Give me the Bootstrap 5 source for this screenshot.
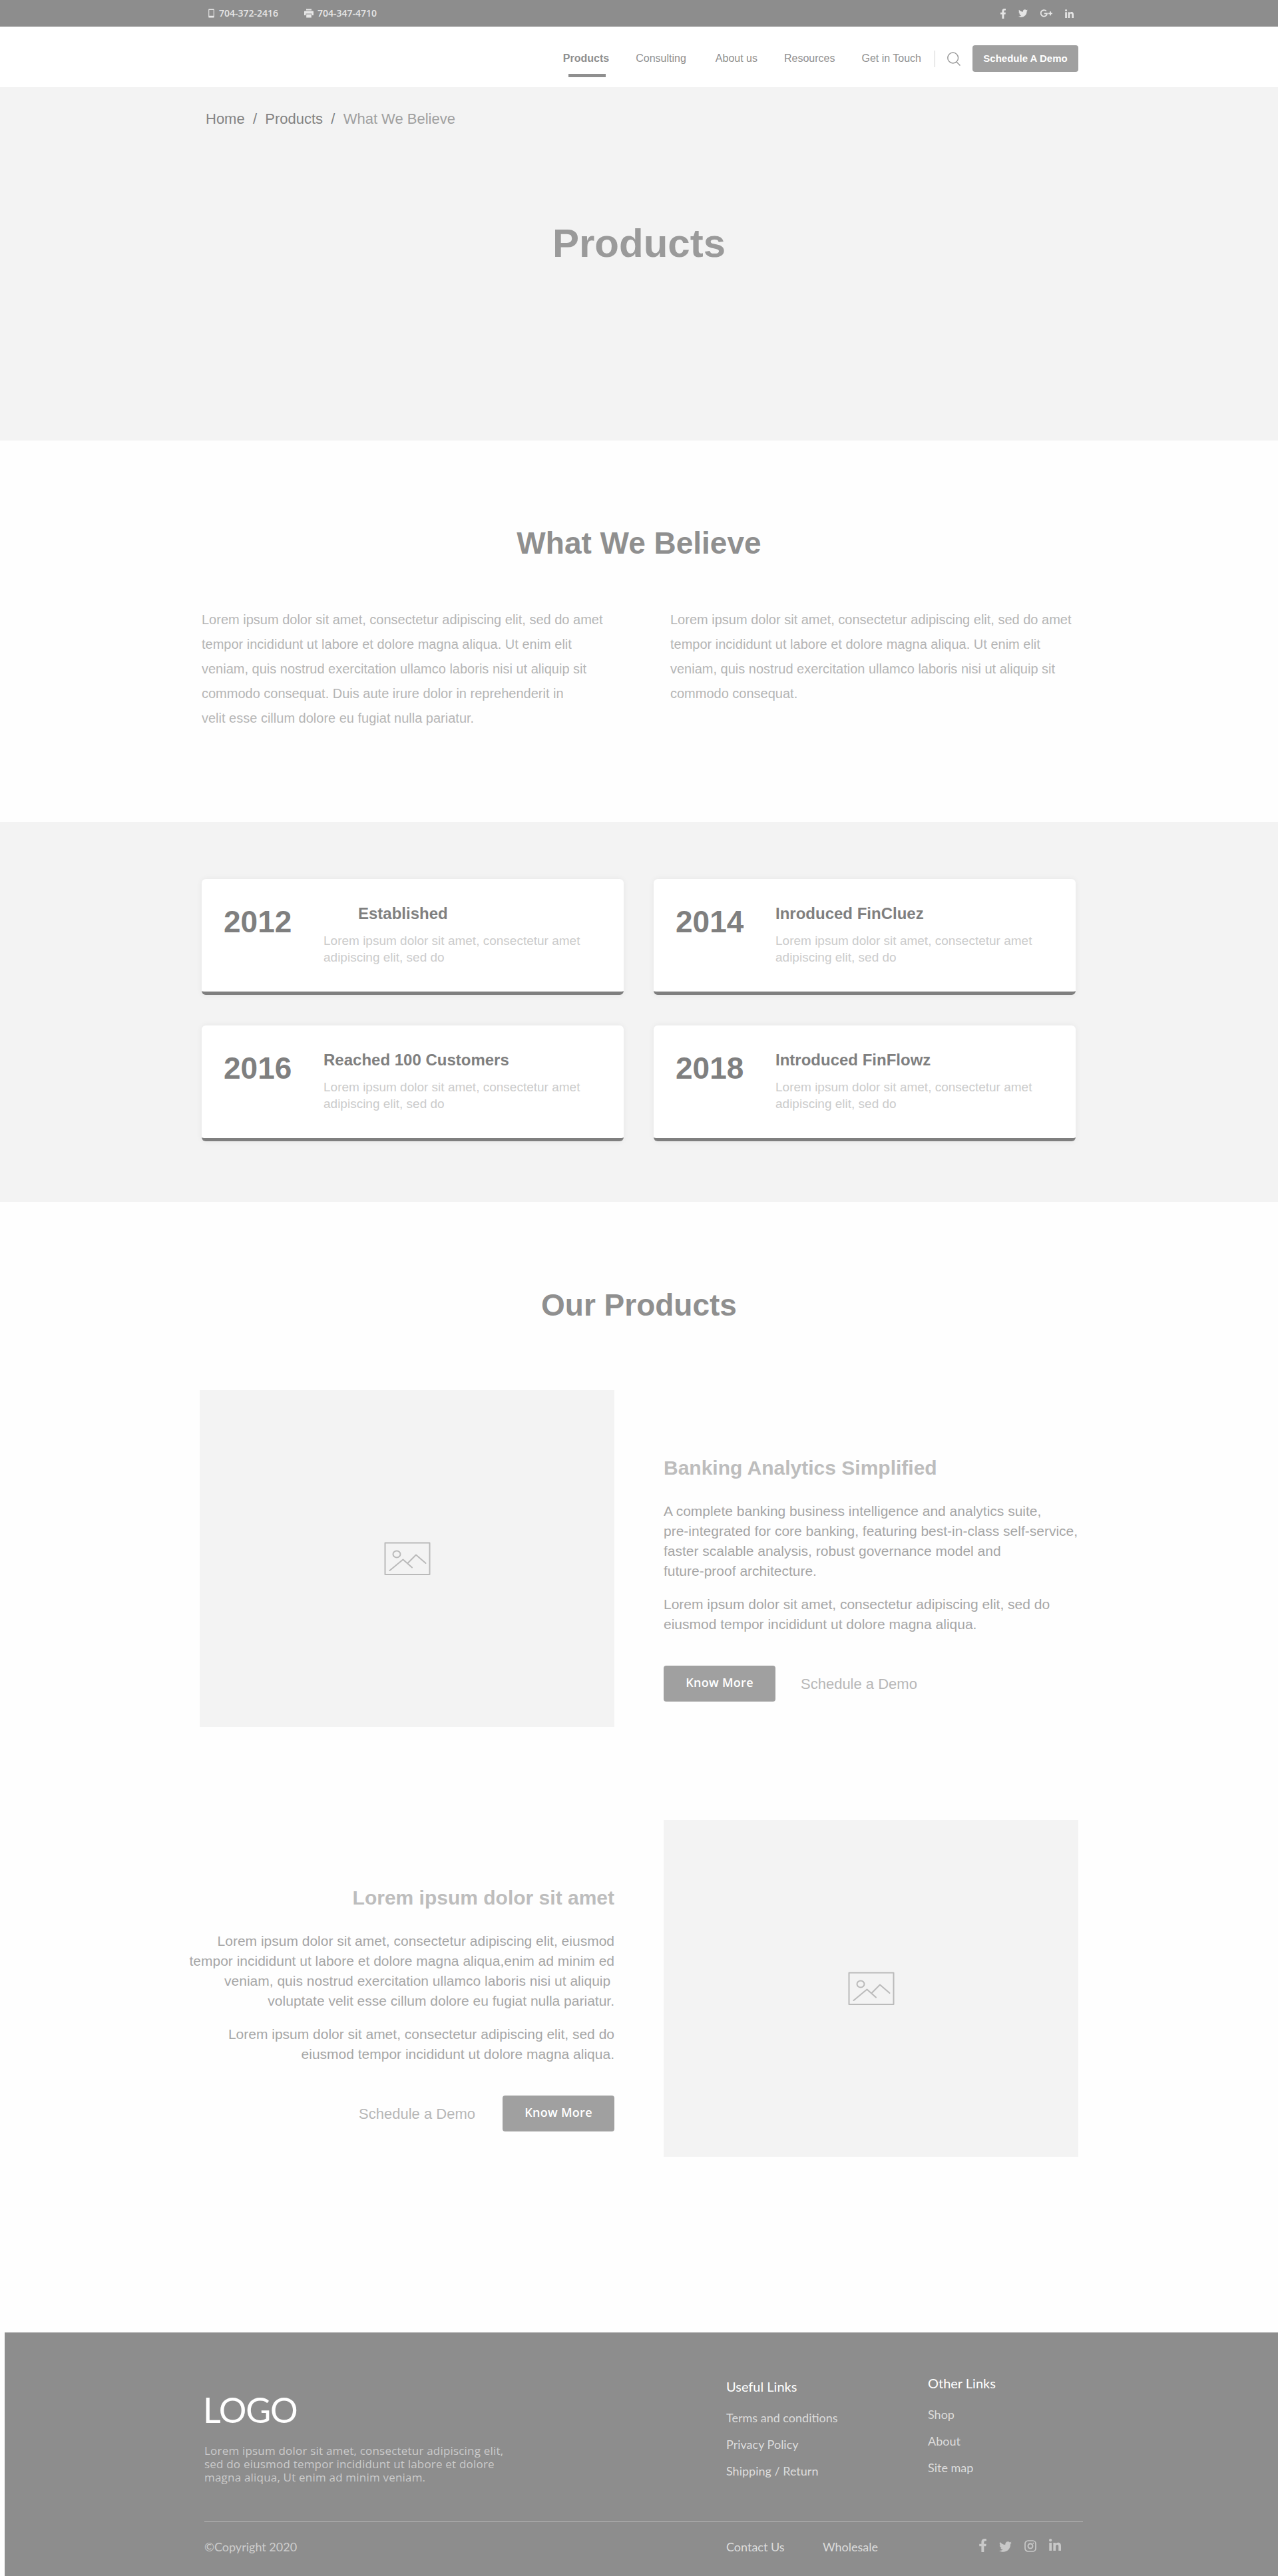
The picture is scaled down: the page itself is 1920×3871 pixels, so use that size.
<!DOCTYPE html>
<html lang="en">
<head>
<meta charset="utf-8">
<meta name="viewport" content="width=device-width, initial-scale=1">
<title>Products</title>
<link href="https://cdn.jsdelivr.net/npm/bootstrap@5.3.0/dist/css/bootstrap.min.css" rel="stylesheet">
<style>
  body { font-family: "Liberation Sans", Arial, sans-serif; background: #fefefe; color: #8f8f8f; }
  a { color: inherit; text-decoration: none; }
  svg { display: block; flex: none; }
  p { margin: 0; white-space: pre-line; }
  .container { max-width: 1320px; padding: 0; }
  .tone-soft { background: #f3f3f3; }

  .top-strip { height: 40px; background: #8d8d8d; color: #e6e6e6; font: 600 14px/20px "Open Sans", sans-serif; }
  .top-strip .phones { padding-left: 13px; gap: 39px; }
  .top-strip .phones a { gap: 7px; }
  .top-strip .phones .fax { gap: 6px; }
  .top-strip .socials { padding-right: 7px; gap: 19px; fill: #e6e6e6; }

  .site-header { height: 91px; background: #fff; }
  .site-header .container { height: 91px; padding-top: 5px; }
  .site-header .nav { gap: 40px; }
  .site-header .nav-link { padding: 0; font-size: 16px; line-height: 24px; color: #8f8f8f; }
  .site-header .nav-link.wide { margin-left: 4px; }
  .site-header .nav-link.active { font-weight: 700; }
  .site-header .nav-link.active::after { content: ""; position: absolute; left: 8px; top: 35px; width: 56px; height: 5px; background: #8f8f8f; }
  .site-header .rule { width: 1px; height: 25px; background: #cfcfcf; margin: 0 18px 0 20px; }
  .btn-grey { background: #a0a0a0; color: #fff; border: 0; border-radius: 4px; padding: 0; }
  .btn-demo { width: 159px; height: 40px; font-size: 15px; font-weight: 700; line-height: 39px; margin-left: 18px; }

  .hero { height: 531px; }
  .hero .breadcrumb-line { padding: 30px 0 0 9px; font-size: 22px; line-height: 36px; white-space: pre; color: #838383; }
  .hero .breadcrumb-line span { color: #a0a0a0; }
  .hero h1 { font-size: 60px; line-height: 70px; font-weight: 700; color: #9a9a9a; margin: 134px 0 0; }

  .section-title { font-size: 46px; line-height: 56px; font-weight: 700; color: #8f8f8f; margin: 0; }
  .believe { height: 573px; padding-top: 126px; }
  .believe .cols { margin-top: 69px; padding-left: 3px; }
  .believe p { flex: 0 0 704px; font-size: 20px; line-height: 37px; color: #b5b5b5; }

  .timeline { height: 571px; padding-top: 86px; }
  .timeline .grid { padding: 0 4px 0 3px; column-gap: 45px; row-gap: 46px; }
  .milestone { width: 634px; height: 174px; background: #fff; border: 0; border-bottom: 5px solid #7f7f7f; border-radius: 6px; box-shadow: 0 0 10px rgba(0,0,0,.06); padding: 36px 0 0 33px; }
  .milestone .year { width: 150px; font-size: 46px; line-height: 56px; font-weight: 700; color: #7f7f7f; }
  .milestone h3 { font-size: 24px; line-height: 30px; font-weight: 700; color: #7f7f7f; margin: 1px 0 0; }
  .milestone h3.indent { padding-left: 52px; }
  .milestone p { font-size: 19px; line-height: 25px; color: #cbcbcb; margin-top: 13px; }

  .products { padding-top: 127px; height: 1699px; }
  .products .first { margin-top: 100px; }
  .products .second { margin-top: 140px; }
  .photo { width: 623px; height: 506px; background: #f3f3f3; }
  .info { width: 623px; padding-top: 97px; }
  .info h2 { font-size: 30px; line-height: 40px; font-weight: 700; color: #bdbdbd; margin: 0 0 30px; }
  .info p { font-size: 21px; line-height: 30px; color: #a6a6a6; margin-bottom: 20px; white-space: pre; }
  .info .actions { margin-top: 27px; gap: 38px; font-size: 22px; color: #b7b7b7; }
  .info.flip .actions { gap: 41px; }
  .btn-more { width: 168px; height: 54px; font: 600 18px/50px "Open Sans", sans-serif; letter-spacing: .3px; }

  footer { margin-left: 7px; height: 366px; background: #8d8d8d; color: #dcdcdc; font: 18px/24px Lato, sans-serif; }
  footer .wrap { width: 1320px; margin-left: 300px; }
  footer .upper { height: 285px; border-bottom: 1px solid #b3b3b3; }
  footer .about { width: 784px; padding-top: 88px; }
  footer .logo-text { font-size: 52px; line-height: 56px; letter-spacing: -1.2px; margin-left: -2px; color: #fff; }
  footer .about p { font: 17px/20px "Open Sans", sans-serif; letter-spacing: .2px; color: #cbcbcb; margin-top: 24px; }
  footer .links h4 { font-size: 20px; line-height: 24px; font-weight: 400; color: #fff; margin: 0 0 23px; }
  footer .links a { display: block; line-height: 24px; margin-bottom: 16px; }
  footer .useful { width: 303px; padding-top: 69px; }
  footer .other { padding-top: 64px; }
  footer .lower { height: 80px; padding-top: 25px; }
  footer .copy { width: 784px; color: #cdcdcd; }
  footer .contact { width: 145px; }
  footer .wholesale { width: 235px; }
  footer .socials { fill: #c8c8c8; gap: 19px; }
</style>
</head>
<body>

<svg width="0" height="0" class="position-absolute">
  <symbol id="i-fb" viewBox="22 0 272 512"><path d="M279.14 288l14.22-92.66h-88.91v-60.13c0-25.35 12.42-50.06 52.24-50.06h40.42V6.26S260.43 0 225.36 0c-73.22 0-121.08 44.38-121.08 124.72v70.62H22.89V288h81.39v224h100.17V288z"/></symbol>
  <symbol id="i-tw" viewBox="0 48 512 416"><path d="M459.37 151.716c.325 4.548.325 9.097.325 13.645 0 138.72-105.583 298.558-298.558 298.558-59.452 0-114.68-17.219-161.137-47.106 8.447.974 16.568 1.299 25.34 1.299 49.055 0 94.213-16.568 130.274-44.832-46.132-.975-84.792-31.188-98.112-72.772 6.498.974 12.995 1.624 19.818 1.624 9.421 0 18.843-1.3 27.614-3.573-48.081-9.747-84.143-51.98-84.143-102.985v-1.299c13.969 7.797 30.214 12.67 47.431 13.319-28.264-18.843-46.781-51.005-46.781-87.391 0-19.492 5.197-37.36 14.294-52.954 51.655 63.675 129.3 105.258 216.365 109.807-1.624-7.797-2.599-15.918-2.599-24.04 0-57.828 46.782-104.934 104.934-104.934 30.213 0 57.502 12.67 76.67 33.137 23.715-4.548 46.456-13.32 66.599-25.34-7.798 24.366-24.366 44.833-46.132 57.827 21.117-2.273 41.584-8.122 60.426-16.243-14.292 20.791-32.161 39.308-52.628 54.253z"/></symbol>
  <symbol id="i-in" viewBox="0 0 448 448"><path d="M100.28 448H7.4V148.9h92.88zM53.79 108.1C24.09 108.1 0 83.5 0 53.8a53.79 53.79 0 0 1 107.58 0c0 29.7-24.1 54.3-53.79 54.3zM447.9 448h-92.68V302.4c0-34.7-.7-79.2-48.29-79.2-48.29 0-55.69 37.7-55.69 76.7V448h-92.78V148.9h89.08v40.8h1.3c12.4-23.5 42.69-48.3 87.88-48.3 94 0 111.28 61.9 111.28 142.3V448z"/></symbol>
  <symbol id="i-pic" viewBox="0 0 70 51"><g fill="none" stroke="#bababa" stroke-width="2" stroke-linecap="round" stroke-linejoin="round"><rect x="1.5" y="1.5" width="67" height="47.5"/><ellipse cx="19" cy="18.5" rx="5.5" ry="5"/><path d="M8.5 43 28.5 26.5 42 38.5M35.5 32 48 19.5 62.5 32"/></g></symbol>
</svg>

<div class="top-strip">
  <div class="container h-100 d-flex justify-content-between align-items-center">
    <div class="phones d-flex">
      <a href="#" class="d-flex align-items-center">
        <svg width="9" height="14" viewBox="0 0 9 14"><path fill="#e6e6e6" fill-rule="evenodd" d="M1 .5h7a.8.8 0 0 1 .8.8v11.5a.8.8 0 0 1-.8.7H1a.8.8 0 0 1-.8-.7V1.3A.8.8 0 0 1 1 .5zM1.300 2v8.700h6.400V2z"/></svg>
        704-372-2416
      </a>
      <a href="#" class="fax d-flex align-items-center">
        <svg width="14" height="14" viewBox="0 0 14 14" fill="#e6e6e6"><path d="M3 .5h8v2H3zM1 3.500h12a1 1 0 0 1 1 1V10h-2.500V7.500h-9V10H0V4.500a1 1 0 0 1 1-1zM3.200 8.500h7.600v5H3.200z"/></svg>
        704-347-4710
      </a>
    </div>
    <div class="socials d-flex align-items-center">
      <svg width="8" height="15"><use href="#i-fb"/></svg>
      <svg width="14" height="12"><use href="#i-tw"/></svg>
      <svg width="18" height="12" viewBox="0 0 18 12" fill="none" stroke="#e6e6e6" stroke-width="1.900"><path d="M8.800 2.600A4.700 4.700 0 1 0 10.100 6.200H5.800M12 6.200h6M15 3.200v6"/></svg>
      <svg width="13" height="13"><use href="#i-in"/></svg>
    </div>
  </div>
</div>

<header class="site-header">
  <div class="container d-flex justify-content-end align-items-center">
    <nav class="nav flex-nowrap">
      <a class="nav-link active position-relative" href="#">Products</a>
      <a class="nav-link" href="#">Consulting</a>
      <a class="nav-link wide" href="#">About us</a>
      <a class="nav-link" href="#">Resources</a>
      <a class="nav-link" href="#">Get in Touch</a>
    </nav>
    <span class="rule"></span>
    <svg width="20" height="21" viewBox="0 0 20 21" fill="none" stroke="#9a9a9a" stroke-width="1.500"><circle cx="8.700" cy="9" r="7.900"/><path d="M14 15l5.500 5.500"/></svg>
    <a class="btn btn-grey btn-demo" href="#">Schedule A Demo</a>
  </div>
</header>

<section class="hero tone-soft">
  <div class="container">
    <div class="breadcrumb-line">Home  /  Products  /  <span>What We Believe</span></div>
    <h1 class="text-center">Products</h1>
  </div>
</section>

<section class="believe">
  <div class="container">
    <h2 class="section-title text-center">What We Believe</h2>
    <div class="cols d-flex">
      <p>Lorem ipsum dolor sit amet, consectetur adipiscing elit, sed do amet
tempor incididunt ut labore et dolore magna aliqua. Ut enim elit
veniam, quis nostrud exercitation ullamco laboris nisi ut aliquip sit
commodo consequat. Duis aute irure dolor in reprehenderit in
velit esse cillum dolore eu fugiat nulla pariatur.</p>
      <p>Lorem ipsum dolor sit amet, consectetur adipiscing elit, sed do amet
tempor incididunt ut labore et dolore magna aliqua. Ut enim elit
veniam, quis nostrud exercitation ullamco laboris nisi ut aliquip sit
commodo consequat.</p>
    </div>
  </div>
</section>

<section class="timeline tone-soft">
  <div class="container grid d-flex flex-wrap">
    <div class="card milestone flex-row">
      <div class="year">2012</div>
      <div><h3 class="indent">Established</h3><p>Lorem ipsum dolor sit amet, consectetur amet
adipiscing elit, sed do</p></div>
    </div>
    <div class="card milestone flex-row">
      <div class="year">2014</div>
      <div><h3>Inroduced FinCluez</h3><p>Lorem ipsum dolor sit amet, consectetur amet
adipiscing elit, sed do</p></div>
    </div>
    <div class="card milestone flex-row">
      <div class="year">2016</div>
      <div><h3>Reached 100 Customers</h3><p>Lorem ipsum dolor sit amet, consectetur amet
adipiscing elit, sed do</p></div>
    </div>
    <div class="card milestone flex-row">
      <div class="year">2018</div>
      <div><h3>Introduced FinFlowz</h3><p>Lorem ipsum dolor sit amet, consectetur amet
adipiscing elit, sed do</p></div>
    </div>
  </div>
</section>

<section class="products">
  <div class="container">
    <h2 class="section-title text-center">Our Products</h2>
    <div class="first d-flex justify-content-between">
      <div class="photo d-flex align-items-center justify-content-center"><svg width="70" height="51"><use href="#i-pic"/></svg></div>
      <div class="info d-flex flex-column align-items-start">
        <h2>Banking Analytics Simplified</h2>
        <p>A complete banking business intelligence and analytics suite,
pre-integrated for core banking, featuring best-in-class self-service,
faster scalable analysis, robust governance model and
future-proof architecture.</p>
        <p>Lorem ipsum dolor sit amet, consectetur adipiscing elit, sed do
eiusmod tempor incididunt ut dolore magna aliqua.</p>
        <div class="actions d-flex align-items-center">
          <a class="btn btn-grey btn-more" href="#">Know More</a>
          <a href="#">Schedule a Demo</a>
        </div>
      </div>
    </div>
    <div class="second d-flex justify-content-between">
      <div class="info flip d-flex flex-column align-items-end text-end">
        <h2>Lorem ipsum dolor sit amet</h2>
        <p>Lorem ipsum dolor sit amet, consectetur adipiscing elit, eiusmod
tempor incididunt ut labore et dolore magna aliqua,enim ad minim ed
veniam, quis nostrud exercitation ullamco laboris nisi ut aliquip&nbsp;
voluptate velit esse cillum dolore eu fugiat nulla pariatur.</p>
        <p>Lorem ipsum dolor sit amet, consectetur adipiscing elit, sed do
eiusmod tempor incididunt ut dolore magna aliqua.</p>
        <div class="actions d-flex align-items-center">
          <a href="#">Schedule a Demo</a>
          <a class="btn btn-grey btn-more" href="#">Know More</a>
        </div>
      </div>
      <div class="photo d-flex align-items-center justify-content-center"><svg width="70" height="51"><use href="#i-pic"/></svg></div>
    </div>
  </div>
</section>

<footer>
  <div class="wrap">
    <div class="upper d-flex">
      <div class="about">
        <div class="logo-text">LOGO</div>
        <p>Lorem ipsum dolor sit amet, consectetur adipiscing elit,
sed do eiusmod tempor incididunt ut labore et dolore
magna aliqua, Ut enim ad minim veniam.</p>
      </div>
      <div class="links useful">
        <h4>Useful Links</h4>
        <a href="#">Terms and conditions</a>
        <a href="#">Privacy Policy</a>
        <a href="#">Shipping / Return</a>
      </div>
      <div class="links other">
        <h4>Other Links</h4>
        <a href="#">Shop</a>
        <a href="#">About</a>
        <a href="#">Site map</a>
      </div>
    </div>
    <div class="lower d-flex">
      <div class="copy">©Copyright 2020</div>
      <a href="#" class="contact">Contact Us</a>
      <a href="#" class="wholesale">Wholesale</a>
      <div class="socials d-flex align-items-start">
        <svg width="11" height="20"><use href="#i-fb"/></svg>
        <svg width="19" height="16" class="mt-1"><use href="#i-tw"/></svg>
        <svg width="18" height="20" viewBox="0 -2 18 20" fill="none" stroke="#c8c8c8"><rect x="1" y="1" width="16" height="16" rx="4.500" stroke-width="1.700"/><circle cx="9" cy="9" r="3.500" stroke-width="1.900"/><circle cx="13.300" cy="4.700" r="1" fill="#c8c8c8" stroke="none"/></svg>
        <svg width="18" height="18"><use href="#i-in"/></svg>
      </div>
    </div>
  </div>
</footer>

<script src="https://cdn.jsdelivr.net/npm/bootstrap@5.3.0/dist/js/bootstrap.bundle.min.js"></script>
</body>
</html>
